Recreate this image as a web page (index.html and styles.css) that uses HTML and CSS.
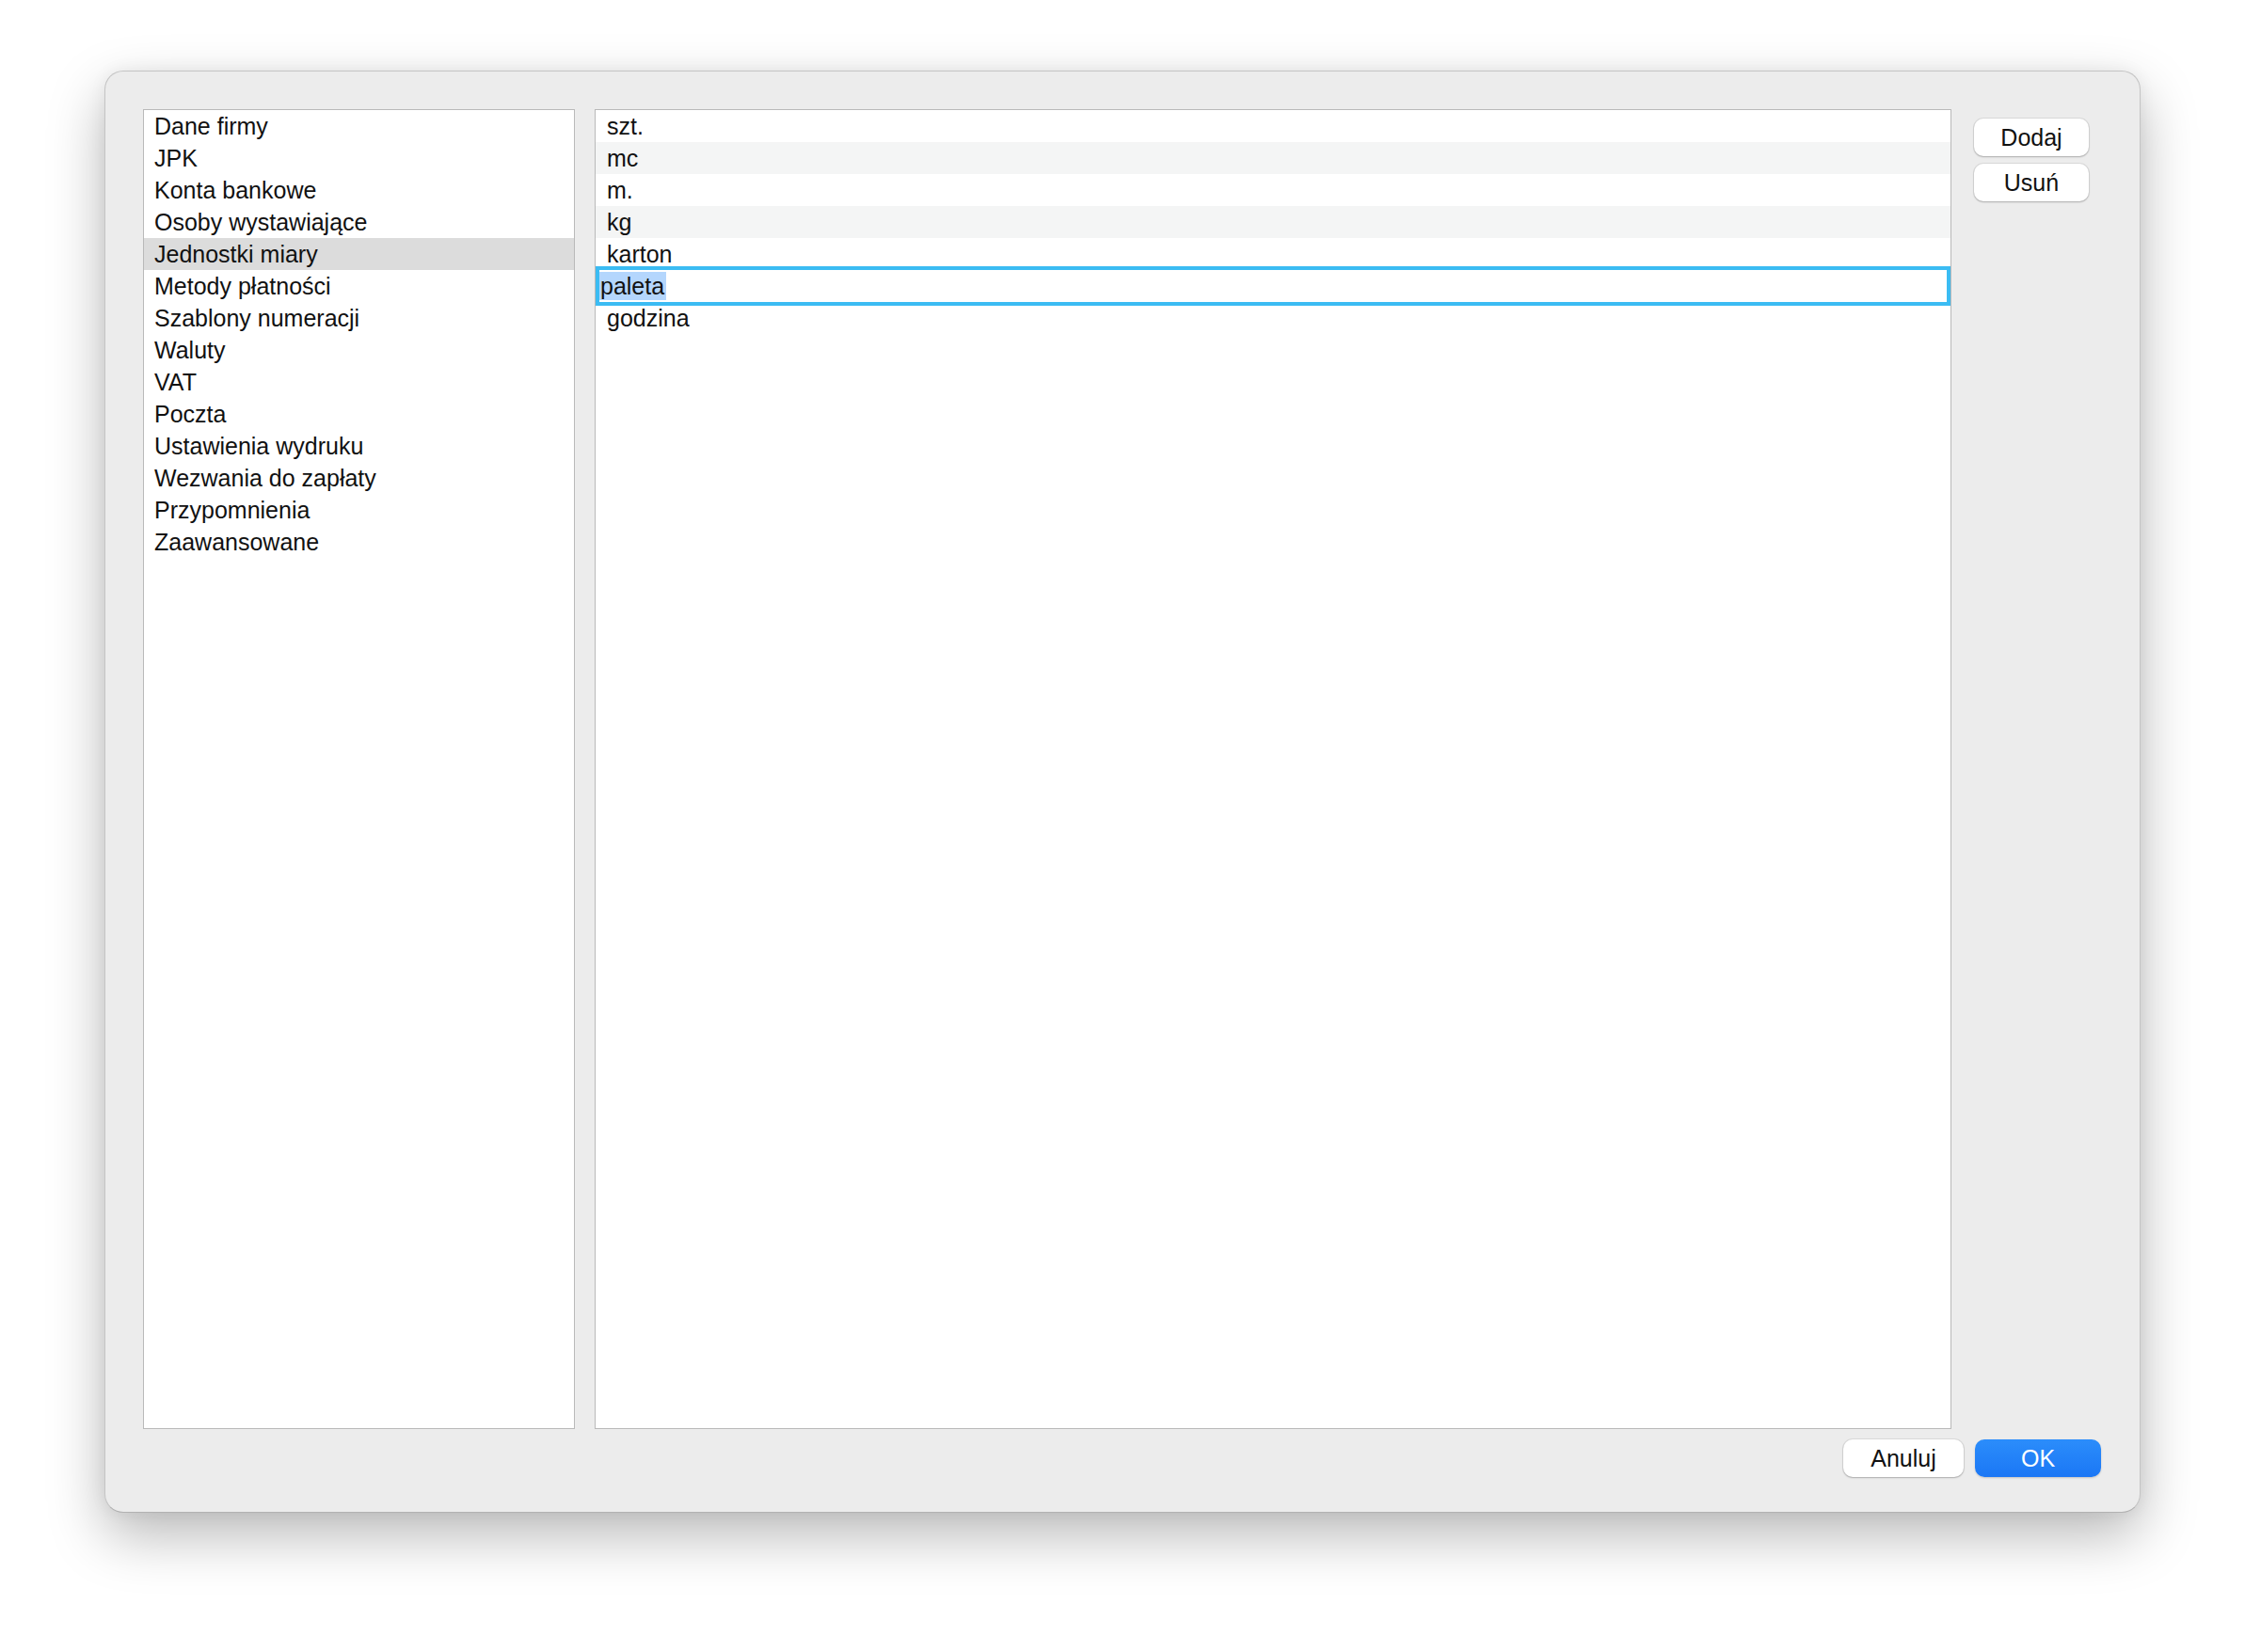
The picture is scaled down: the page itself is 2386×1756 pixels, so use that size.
FILE: index.html
```html
<!DOCTYPE html>
<html lang="pl">
<head>
<meta charset="utf-8">
<title>Ustawienia</title>
<link rel="stylesheet" href="styles.css">
</head>
<body>
<div class="window">
  <div class="main">
    <ul class="list sidebar">
      <li>Dane firmy</li>
      <li>JPK</li>
      <li>Konta bankowe</li>
      <li>Osoby wystawiające</li>
      <li class="selected">Jednostki miary</li>
      <li>Metody płatności</li>
      <li>Szablony numeracji</li>
      <li>Waluty</li>
      <li>VAT</li>
      <li>Poczta</li>
      <li>Ustawienia wydruku</li>
      <li>Wezwania do zapłaty</li>
      <li>Przypomnienia</li>
      <li>Zaawansowane</li>
    </ul>
    <ul class="list units">
      <li>szt.</li>
      <li class="alt">mc</li>
      <li>m.</li>
      <li class="alt">kg</li>
      <li>karton</li>
      <li class="editing"><div class="editor"><span class="sel">paleta</span></div></li>
      <li>godzina</li>
    </ul>
    <div class="side-buttons">
      <button class="btn">Dodaj</button>
      <button class="btn">Usuń</button>
    </div>
  </div>
  <div class="footer">
    <button class="btn cancel">Anuluj</button>
    <button class="btn primary">OK</button>
  </div>
</div>
</body>
</html>
```

FILE: styles.css
```css
* { box-sizing: border-box; }
html, body {
  margin: 0;
  padding: 0;
  background: #ffffff;
}
body {
  font-family: "Liberation Sans", Arial, sans-serif;
  font-size: 25px;
  color: #111111;
  width: 2386px;
  height: 1756px;
  overflow: hidden;
  padding-top: 75px;
  padding-left: 111px;
}
.window {
  width: 2164px;
  height: 1533px;
  background: #ececec;
  border: 1px solid #c4c4c4;
  border-bottom-color: #b2b2b2;
  border-radius: 20px;
  box-shadow: 0 24px 60px rgba(0, 0, 0, 0.28), 0 0 18px rgba(0, 0, 0, 0.06);
  padding: 40px 41px 37px 40px;
  display: flex;
  flex-direction: column;
}
.main {
  display: flex;
  height: 1403px;
}
.list {
  list-style: none;
  margin: 0;
  padding: 0;
  background: #ffffff;
  border: 1px solid #b9b9b9;
  height: 100%;
  overflow: hidden;
}
.list li {
  height: 34px;
  line-height: 35px;
  white-space: nowrap;
}
.sidebar {
  width: 459px;
  flex: none;
}
.sidebar li {
  padding-left: 11px;
}
.sidebar li.selected {
  background: #dcdcdc;
}
.units {
  width: 1442px;
  flex: none;
  margin-left: 21px;
}
.units li {
  padding-left: 12px;
}
.units li.alt {
  background: #f4f5f5;
}
.units li.editing {
  padding-left: 0;
  display: flow-root;
  position: relative;
  z-index: 1;
}
.editor {
  height: 42px;
  margin-top: -4px;
  border: 4px solid #3bbcf3;
  background: #ffffff;
  line-height: 34px;
}
.sel {
  background: #b4d6fd;
  display: inline-block;
  line-height: 31px;
  height: 30px;
  padding: 0 2px 0 1px;
  margin-top: 2px;
  vertical-align: top;
}
.side-buttons {
  margin-left: 24px;
  padding-top: 10px;
  display: flex;
  flex-direction: column;
  gap: 8px;
}
.btn {
  font-family: "Liberation Sans", Arial, sans-serif;
  font-size: 25px;
  color: #111111;
  background: #ffffff;
  border: none;
  border-radius: 10px;
  box-shadow: 0 0 0 1px rgba(0, 0, 0, 0.07), 0 1px 2px rgba(0, 0, 0, 0.22);
  height: 40px;
  width: 122px;
  padding: 0;
  line-height: 40px;
  text-align: center;
}
.footer {
  margin-top: 11px;
  display: flex;
  justify-content: flex-end;
  gap: 12px;
}
.cancel {
  width: 128px;
}
.primary {
  width: 134px;
  color: #ffffff;
  background: linear-gradient(#2b8dfb, #1b77f5);
  box-shadow: 0 1px 2px rgba(0, 0, 0, 0.18);
}
```
